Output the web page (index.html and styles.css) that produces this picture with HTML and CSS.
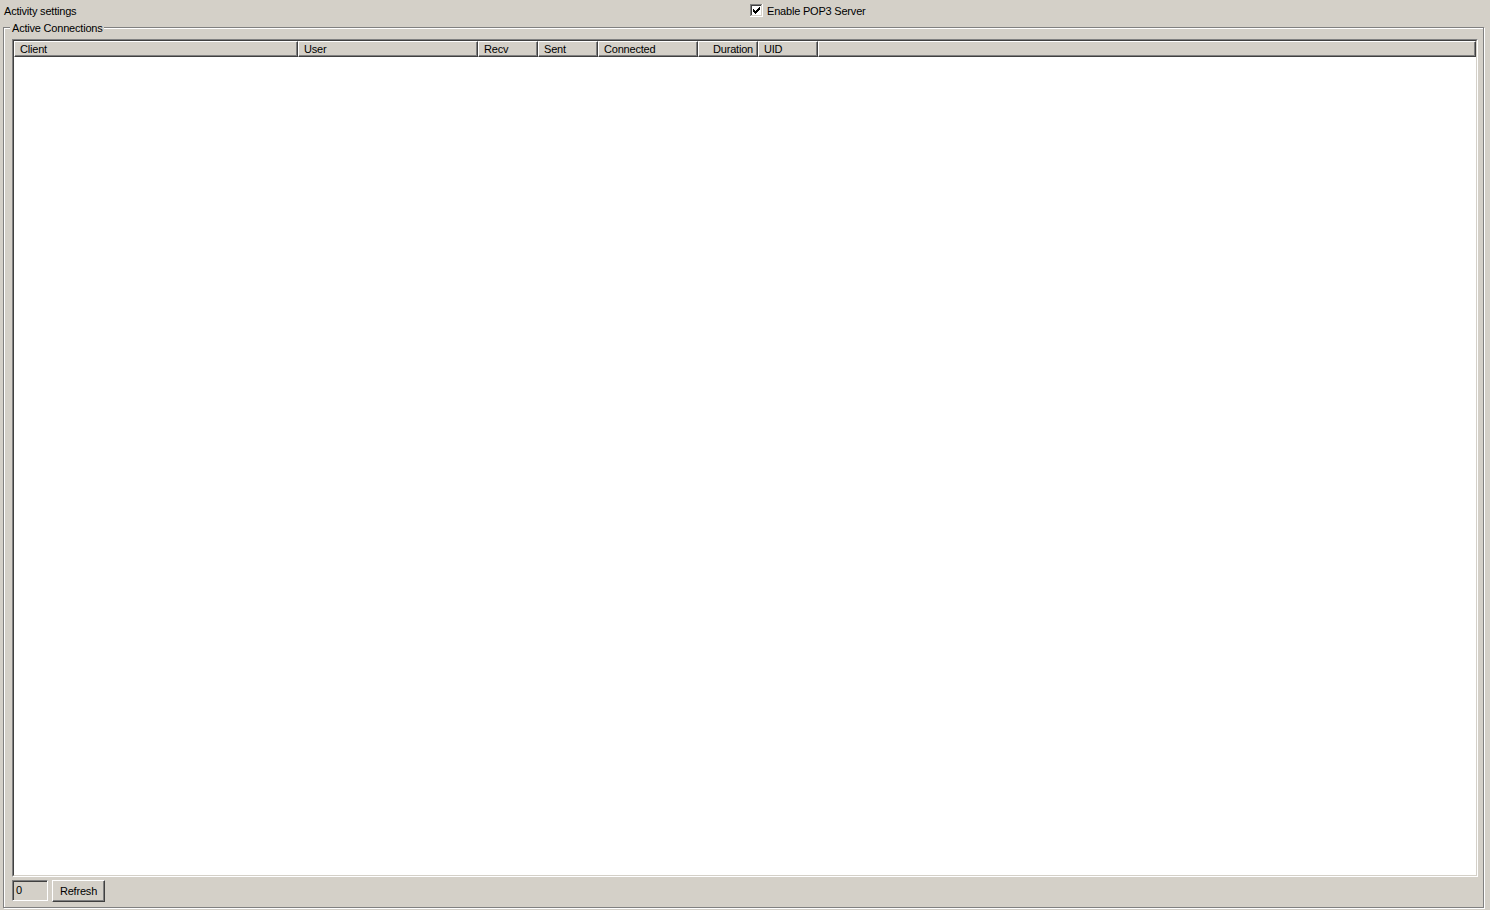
FILE: index.html
```html
<!DOCTYPE html>
<html>
<head>
<meta charset="utf-8">
<title>Activity settings</title>
<link rel="stylesheet" href="styles.css">
</head>
<body>
<div class="topbar">
  <div class="title">Activity settings</div>
  <label class="check">
    <svg class="cbox" width="13" height="13" viewBox="0 0 13 13" shape-rendering="crispEdges">
      <rect x="0" y="0" width="12" height="1" fill="#808080"/>
      <rect x="0" y="0" width="1" height="12" fill="#808080"/>
      <rect x="0" y="12" width="13" height="1" fill="#ffffff"/>
      <rect x="12" y="0" width="1" height="13" fill="#ffffff"/>
      <rect x="1" y="1" width="10" height="1" fill="#404040"/>
      <rect x="1" y="1" width="1" height="10" fill="#404040"/>
      <rect x="1" y="11" width="11" height="1" fill="#d4d0c8"/>
      <rect x="11" y="1" width="1" height="11" fill="#d4d0c8"/>
      <rect x="2" y="2" width="9" height="9" fill="#ffffff"/>
      <rect x="3" y="5" width="1" height="3" fill="#000"/>
      <rect x="4" y="6" width="1" height="3" fill="#000"/>
      <rect x="5" y="7" width="1" height="3" fill="#000"/>
      <rect x="6" y="6" width="1" height="3" fill="#000"/>
      <rect x="7" y="5" width="1" height="3" fill="#000"/>
      <rect x="8" y="4" width="1" height="3" fill="#000"/>
      <rect x="9" y="3" width="1" height="3" fill="#000"/>
    </svg>
    <span class="check-label">Enable POP3 Server</span>
  </label>
</div>
<div class="group">
  <span class="legend">Active Connections</span>
  <div class="list">
    <div class="list-inner">
      <div class="header">
        <div class="col c-client">Client</div>
        <div class="col c-user">User</div>
        <div class="col c-recv">Recv</div>
        <div class="col c-sent">Sent</div>
        <div class="col c-conn">Connected</div>
        <div class="col c-dur">Duration</div>
        <div class="col c-uid">UID</div>
        <div class="col c-fill"></div>
      </div>
      <div class="rows"></div>
    </div>
  </div>
  <div class="bottom">
    <div class="count">0</div>
    <button class="btn" type="button">Refresh</button>
  </div>
</div>
</body>
</html>
```
FILE: styles.css
```css
html, body {
  margin: 0;
  padding: 0;
}
body {
  width: 1490px;
  height: 910px;
  background: #d4d0c8;
  font-family: "Liberation Sans", Arial, sans-serif;
  font-size: 11px;
  line-height: 13px;
  letter-spacing: -0.2px;
  color: #000;
  overflow: hidden;
}
.topbar {
  height: 27px;
  display: grid;
  grid-template-columns: 745px 1fr;
  align-items: start;
}
.title {
  padding: 5px 0 0 4px;
}
.check {
  display: flex;
  align-items: flex-start;
  gap: 4px;
  padding: 4px 0 0 5px;
}
.check-label {
  padding-top: 1px;
}
.cbox {
  display: block;
  flex: none;
}
.group {
  position: relative;
  box-sizing: border-box;
  height: 881px;
  margin: 0 6px 0 3px;
  border: 1px solid #808080;
  box-shadow: 1px 1px 0 #ffffff, inset 1px 1px 0 #ffffff;
  padding: 11px 5px 5px 8px;
  display: flex;
  flex-direction: column;
  gap: 3px;
}
.legend {
  position: absolute;
  left: 6px;
  top: -6px;
  padding: 0 1px 0 2px;
  background: #d4d0c8;
  line-height: 13px;
}
.list {
  flex: 1;
  display: flex;
  border: 1px solid;
  border-color: #808080 #ffffff #ffffff #808080;
}
.list-inner {
  flex: 1;
  display: flex;
  flex-direction: column;
  border: 1px solid;
  border-color: #404040 #d4d0c8 #d4d0c8 #404040;
  background: #ffffff;
}
.header {
  display: flex;
  height: 16px;
  flex: none;
}
.col {
  box-sizing: border-box;
  height: 16px;
  border: 1px solid;
  border-color: #ffffff #404040 #404040 #ffffff;
  box-shadow: inset -1px -1px 0 #808080;
  background: #d4d0c8;
  padding: 0 5px;
  line-height: 14px;
  white-space: nowrap;
  overflow: hidden;
  flex: none;
}
.c-client { width: 284px; }
.c-user { width: 180px; }
.c-recv { width: 60px; }
.c-sent { width: 60px; }
.c-conn { width: 100px; }
.c-dur { width: 60px; text-align: right; padding-right: 4px; }
.c-uid { width: 60px; }
.c-fill { flex: 1; }
.rows {
  flex: 1;
}
.bottom {
  display: flex;
  align-items: flex-start;
  gap: 4px;
  height: 22px;
}
.count {
  box-sizing: border-box;
  width: 36px;
  height: 21px;
  border: 1px solid;
  border-color: #808080 #ffffff #ffffff #808080;
  box-shadow: inset 1px 1px 0 #404040, inset -1px -1px 0 #d4d0c8;
  background: #d4d0c8;
  padding: 2px 0 0 3px;
  line-height: 14px;
}
.btn {
  box-sizing: border-box;
  width: 53px;
  height: 22px;
  margin: 0;
  padding: 0;
  border: 1px solid;
  border-color: #ffffff #404040 #404040 #ffffff;
  box-shadow: inset -1px -1px 0 #808080;
  background: #d4d0c8;
  font-family: "Liberation Sans", Arial, sans-serif;
  font-size: 11px;
  line-height: 14px;
  letter-spacing: -0.2px;
  color: #000;
  border-radius: 0;
}
```
